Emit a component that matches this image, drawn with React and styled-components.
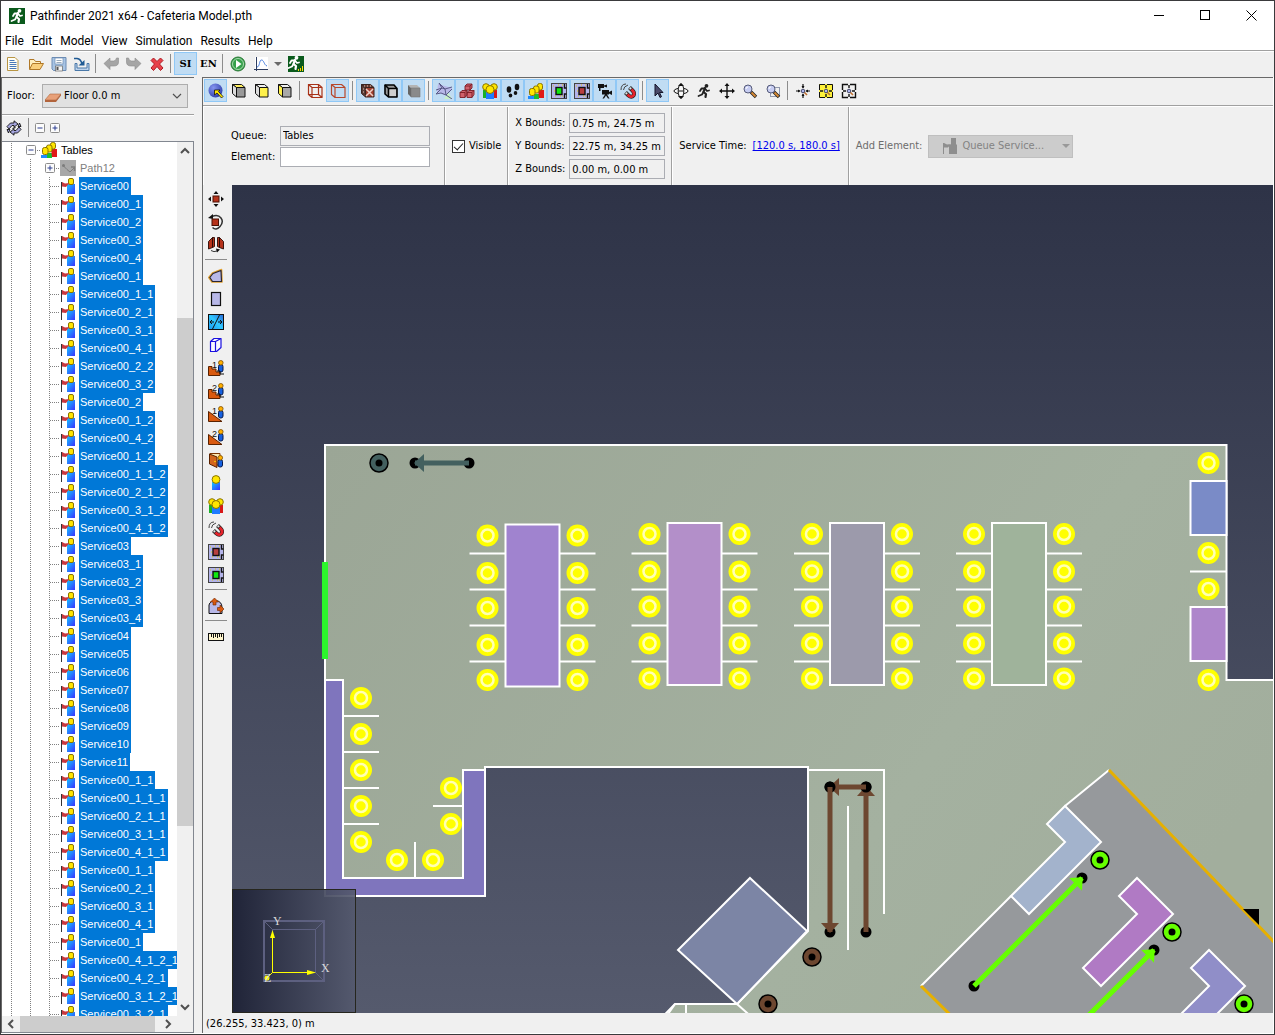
import React from "react";
import styled, { createGlobalStyle, css } from "styled-components";

const Page = createGlobalStyle`
  * {
    box-sizing: border-box;
  }
  body {
    margin: 0;
    background: #f0f0f0;
    overflow: hidden;
  }
  button, input, select {
    font: inherit;
    color: inherit;
    margin: 0;
  }
`;

/* ---------- icons ---------- */

const red = "#b5321a";

const Cube = ({ top = "#ddd", front = "#999", side = "#666", line = "#111" }) => (
  <g stroke={line} strokeLinejoin="round">
    <path d="M1.500 1.500 H10.5 L14 4.5 H5.5 Z" fill={top} />
    <path d="M1.500 1.500 L5.5 4.5 V14 L1.500 10.5 Z" fill={side} />
    <path d="M5.5 4.5 H14 V14 H5.5 Z" fill={front} />
  </g>
);

const Occupant = ({ x = 9.5 }) => (
  <g transform={`translate(${x} 0)`}>
    <rect x="0.5" y="4.500" width="4.500" height="7.500" rx="2" fill="#1560e0" stroke="#05184a" />
    <circle cx="2.800" cy="2.800" r="2.300" fill="#ffb000" stroke="#7a4a00" strokeWidth=".8" />
  </g>
);

const Room = ({ fill }) => (
  <g>
    <rect x=".5" y=".5" width="15" height="15" fill="#b4b4ea" stroke="#444" />
    <path d="M2 3h1M4 13h1M3 8h1M11 2h1M9 13h1M11 13h1M7 2h1" stroke="#e6d200" />
    <rect x="5" y="4.500" width="6" height="7" fill={fill} stroke="#111" strokeWidth="1.400" />
    <path d="M13.500 1v4h2M13.500 15v-4h2" fill="none" stroke="#111" strokeWidth="1.400" />
  </g>
);

const Magnet = () => (
  <g fill="none">
    <path d="M1 7 Q1 1 6 1M3.500 7 Q3.500 3.500 8 2" stroke="#444" />
    <path d="M5.500 9.500 L8.500 12.500 Q11.500 15 13.500 12.500 Q15 10 12.500 7.500 L9.500 4.500" stroke="#222" strokeWidth="4" />
    <path d="M7.500 11.500 L8.500 12.500 Q11.500 15 13.500 12.500 Q15 10 12.500 7.500 L11.500 6.500" stroke="#e5242c" strokeWidth="2.800" />
    <path d="M5.900 9.900 L7 11M9.900 4.900 L11 6" stroke="#e4e4e4" strokeWidth="2.400" />
  </g>
);

const Lens = ({ x = 0, y = 0 }) => (
  <g transform={`translate(${x} ${y})`}>
    <path d="M7.500 7.500 L13 13" stroke="#222" strokeWidth="3.400" />
    <path d="M8.500 8.500 L12.500 12.500" stroke="#d98a35" strokeWidth="1.800" />
    <circle cx="5" cy="5" r="4" fill="#c7cdf2" stroke="#555a78" />
    <path d="M3 5 Q3 3 5 3" fill="none" stroke="#fff" />
  </g>
);

const TinyLens = () => (
  <g>
    <path d="M9 9 L12 12" stroke="#c07030" strokeWidth="1.600" />
    <circle cx="8" cy="8" r="1.800" fill="#aeb6ee" stroke="#44486a" />
  </g>
);

const Group = () => (
  <g>
    <rect x="1" y="7" width="4" height="8" fill="#18b028" />
    <rect x="11" y="7" width="4" height="8" fill="#d81818" />
    <circle cx="4" cy="4" r="3.300" fill="#ffe600" stroke="#8a7400" />
    <circle cx="12" cy="4" r="3.300" fill="#ffe600" stroke="#8a7400" />
    <rect x="4" y="9" width="8" height="7" fill="#1e7bff" />
    <circle cx="8" cy="6.500" r="4" fill="#ffe600" stroke="#8a7400" />
  </g>
);

const Queue = () => (
  <g>
    <path d="M0 13h6v3h-6z" fill="#1e8bff" />
    <path d="M6 11h5v5h-5z" fill="#18c030" />
    <path d="M10 7h6v8h-5z" fill="#e01818" />
    <g fill="#ffe600" stroke="#8a7400">
      <rect x="9.500" y=".5" width="5" height="6.500" rx="2" />
      <rect x="5.500" y="3" width="5.500" height="7" rx="2" />
      <rect x="1.500" y="5.500" width="5.500" height="7" rx="2" />
    </g>
  </g>
);

const Runner = ({ color = "#fff" }) => (
  <g fill="none" stroke={color} strokeWidth="1.800" strokeLinecap="round" strokeLinejoin="round">
    <circle cx="10.500" cy="2.800" r="1" fill={color} />
    <path d="M9 5 L7.500 9 L10 11 L9.500 14" strokeWidth="2.200" />
    <path d="M7.500 9 L6 11.500 L2.500 13" />
    <path d="M9 5.500 L5.500 5.500 L4 8M9 5.500 L11 8 L13 7.500" />
  </g>
);

const Ramp = ({ n, stair }) => (
  <g>
    <path
      d={stair ? "M.5 6.500 H4 V9 H8 V12 H12 V15.500 H.5 Z" : "M.5 5.500 L14 15.500 H.5 Z"}
      fill="#d95a10"
      stroke="#5a2200"
    />
    <Occupant x={10} />
    {stair && <path d="M9 11 H12 V14 H16" fill="none" stroke="#111" />}
    <text x="4" y="8" fontSize="9" fontFamily="Liberation Sans" fill="#111">{n}</text>
  </g>
);

const arrows4 = (
  <g fill="#111">
    <path d="M8 0l2.500 3h-5zM8 16l2.500-3h-5zM0 8l3-2.500v5zM16 8l-3-2.500v5z" />
  </g>
);

const ICONS = {
  app: (
    <g>
      <rect width="16" height="16" fill="#0a5a1c" />
      <Runner />
    </g>
  ),
  results: (
    <g>
      <rect width="16" height="16" fill="#0a5a1c" />
      <g transform="translate(-2 -1)"><Runner /></g>
      <path d="M10.500 15v-2M12.500 15v-3M14.500 15v-5" stroke="#ffd800" />
    </g>
  ),
  new: (
    <g>
      <path d="M2.500 1.500h7.500l3 3v10h-10.500z" fill="#fffef4" stroke="#b89544" />
      <path d="M4.500 4.500h5M4.500 6.500h7M4.500 8.500h7M4.500 10.500h7M4.500 12.500h7" stroke="#4a78b8" />
    </g>
  ),
  open: (
    <g stroke="#b07828" strokeLinejoin="round">
      <path d="M1.500 13V3.500h4.500l1.500 2h5v3" fill="#ffefc0" />
      <path d="M1.500 13.500L4.500 7.500h11l-3.500 6z" fill="#f9cf7c" />
    </g>
  ),
  save: (
    <g>
      <path d="M1 1.500h14v13H2.500L1 13z" fill="#a8c4e4" stroke="#6c8cb4" />
      <rect x="4" y="2" width="8" height="6" fill="#fff" stroke="#6c8cb4" strokeWidth=".7" />
      <path d="M5.500 4.500h5M5.500 6.500h5" stroke="#9ab" />
      <rect x="4.500" y="10" width="7" height="5" fill="#f4f4f4" stroke="#666" strokeWidth=".7" />
      <rect x="5.500" y="11" width="2" height="3" fill="#555" />
    </g>
  ),
  importFile: (
    <g fill="none">
      <path d="M1 7.500v7h14v-7h-2v4.500H3V7.500z" fill="#bcd2ec" stroke="#4a78a8" />
      <path d="M0 2.500h3Q7 3 8 8" stroke="#1f5a94" strokeWidth="1.500" />
      <path d="M4.500 9.500H10.500V4z" fill="#1f5a94" />
    </g>
  ),
  undo: <path d="M1 7.500L7 2v3h3.500Q13 5 13.500 2H15.500V6Q15.500 10 11 10H7v3.500z" fill="#a5a5a5" stroke="#8a8a8a" strokeWidth=".6" />,
  redo: <path d="M15 7.500L9 2v3H5.500Q3 5 2.500 2H.5V6Q.5 10 5 10H9v3.500z" fill="#a5a5a5" stroke="#8a8a8a" strokeWidth=".6" />,
  remove: <path d="M2 4.500L4.500 2 8 5.500 11.500 2 14 4.500 10.500 8 14 12 11.500 14.500 8 10.500 4.500 14.500 2 12 5.500 8z" fill="#e8414a" stroke="#b01c24" />,
  run: (
    <g>
      <circle cx="8" cy="8" r="7" fill="#35a04a" stroke="#2c7838" />
      <circle cx="8" cy="8" r="5.500" fill="none" stroke="#a8d8ae" />
      <path d="M6 4l5.500 4L6 12z" fill="#fff" />
    </g>
  ),
  plot: (
    <g fill="none">
      <rect x="2" y="1" width="13" height="13" fill="#fff" />
      <path d="M3.500 1v14M1 13.500h14" stroke="#2c3c60" />
      <path d="M4 11C7 11 6 4 8.500 4S11 9 14 10" stroke="#4a80e0" />
    </g>
  ),
  floor: (
    <g>
      <path d="M0 12l5-6h11l-5 6z" fill="#e8a078" stroke="#b06a40" strokeWidth=".6" />
      <path d="M0 12h11l5-6v1.500L11 14H0z" fill="#b2643c" />
    </g>
  ),
  sync: (
    <g fill="#a4a4dc" stroke="#111" strokeWidth=".9" strokeLinejoin="round">
      <path d="M1 6.500L4.500 3H8V.800L12 4 8 7.200V5.500H6L3 9z" />
      <path d="M15 9.500L11.500 13H8v2.200L4 12l4-3.200v1.700h2L13 7z" />
      <path d="M1 9.500h3L2.500 13zM15 6.500h-3L13.500 3z" />
      <path d="M6.500 8.500l3-1" stroke="#111" strokeWidth="1.200" />
    </g>
  ),
  minus: (
    <g>
      <rect x="3.500" y="3.500" width="9" height="9" rx="1" fill="#fcfcfc" stroke="#8c8c8c" />
      <path d="M5.500 8h5" stroke="#2a3c90" />
    </g>
  ),
  plus: (
    <g>
      <rect x="3.500" y="3.500" width="9" height="9" rx="1" fill="#fcfcfc" stroke="#8c8c8c" />
      <path d="M5.500 8h5M8 5.500v5" stroke="#2a3c90" />
    </g>
  ),
  path: (
    <g>
      <rect width="16" height="16" fill="#a8a8a8" />
      <path d="M3 5.500l4 4 3 2.500 4-4" fill="none" stroke="#7c7c7c" />
      <circle cx="3.500" cy="5.500" r="1.500" fill="#7c7c7c" />
      <path d="M11 7h3.500v4" fill="none" stroke="#7c7c7c" strokeWidth="1.500" />
    </g>
  ),
  service: (
    <g>
      <defs>
        <linearGradient id="body" x1="0" y1="0" x2="1" y2="1">
          <stop offset="0" stopColor="#12c8ff" />
          <stop offset="1" stopColor="#3a30ff" />
        </linearGradient>
      </defs>
      <rect x="7" y="6" width="8" height="10" fill="url(#body)" />
      <rect x="8.500" y=".5" width="5" height="6" rx="1.500" fill="#ffe600" stroke="#8a7400" />
      <path d="M1.500 4v12" stroke="#333" />
      <path d="M2 4l3 1.500 4.500-.5L6 9 2 8.500z" fill="#c8383e" />
    </g>
  ),
  serviceOff: (
    <g fill="#8e8e8e">
      <path d="M7 6.500h8V16H7zM9 0h5v6.500H9zM1 5h1v11H1zM2 5l3 1.500L9 6 6 9.500H2z" />
    </g>
  ),
  globe: (
    <g>
      <defs>
        <radialGradient id="ball" cx=".35" cy=".3" r=".8">
          <stop offset="0" stopColor="#8494ee" />
          <stop offset="1" stopColor="#2a3aa8" />
        </radialGradient>
      </defs>
      <circle cx="7.500" cy="7.500" r="7" fill="url(#ball)" />
      <path d="M6.500 7h5.500l-1.500 1.500 4.500 5-1.500 1.500-4.500-5L6.500 12z" fill="#ffe600" stroke="#111" strokeWidth=".8" />
    </g>
  ),
  top: <Cube top="#ffee60" front="#999" side="#ddd" />,
  front: <Cube top="#eee" front="#fff14a" side="#ddd" />,
  side: <Cube top="#eee" front="#a8a8a8" side="#fff14a" />,
  wire: (
    <g fill="none" stroke="#a83218" strokeWidth="1.200">
      <path d="M1.500 1.500h10v10h-10zM5 4.500h10v10H5zM1.500 1.500L5 4.500M11.500 1.500l3.500 3M1.500 11.500l3.500 3M11.500 11.500l3.500 3" />
    </g>
  ),
  solid: (
    <g fill="none" stroke="#b8482c" strokeWidth="1.200" strokeLinejoin="round">
      <path d="M1.500 1.500h10l3.500 3v10H5l-3.500-3zM1.500 1.500L5 4.500h10M5 4.500v10" />
    </g>
  ),
  texture: (
    <g>
      <Cube top="#6a3a30" front="#a04030" side="#5a3a34" line="#3a2420" />
      <path d="M6 6l7 7M13 6l-7 7" stroke="#f0d0c8" strokeWidth="1.500" />
      <path d="M4 3h1M7 3h1M10 3h1M3 6h1M3 9h1" stroke="#e0c8c0" />
    </g>
  ),
  outline: (
    <g stroke="#000" strokeWidth="1.600" strokeLinejoin="round">
      <path d="M2 2H11L14 5.500V14H5.500L2 11Z" fill="#999" />
      <path d="M2 2L5.500 5.500H14M5.500 5.500V14" fill="none" />
      <path d="M6.500 6.500h6.500v6.500H6.500z" fill="#cfcfcf" stroke="none" />
    </g>
  ),
  shade: (
    <g>
      <path d="M2 2H11L14 5H5Z" fill="#b4b4b4" />
      <path d="M2 2L5 5V14L2 11Z" fill="#666" />
      <path d="M5 5h9v9H5z" fill="#8a8a8a" stroke="#777" strokeWidth=".6" />
    </g>
  ),
  mesh: (
    <g fill="none" stroke="#5a5a88">
      <path d="M2 1l14 4-5 8-10-4z" fill="#b8b8e8" stroke="none" />
      <path d="M12 9l4 7h-8z" fill="#c8f0c8" stroke="none" />
      <path d="M3 0l3 5-6 2M3 0l6 6 7-2M0 11l6-6 3 1 1 6M0 11l5-1 5 2 6-6M10 12l6 4" />
    </g>
  ),
  blocks: (
    <g fill="#d0606a" stroke="#7a1c24" strokeWidth=".9" strokeLinejoin="round">
      <path d="M6 3l2-2h5v4l-2 2H6zM1 9.500l2-2h5v4l-2 3H1zM8 9.500l2-2h5v4l-2 3H8z" />
      <path d="M6 3h5v4M11 3l2-2M1 9.500h5v5M6 9.500l2-2M8 9.500h5v5M13 9.500l2-2" fill="none" />
    </g>
  ),
  group: <Group />,
  steps: (
    <g fill="#111">
      <ellipse cx="4" cy="6.500" rx="2.300" ry="3.300" />
      <ellipse cx="5.500" cy="12.500" rx="1.800" ry="2" />
      <ellipse cx="12" cy="4" rx="2.300" ry="3.300" />
      <ellipse cx="10.500" cy="10" rx="1.800" ry="2" />
    </g>
  ),
  queue: <Queue />,
  roomGreen: <Room fill="#10e810" />,
  roomRed: <Room fill="#b84040" />,
  camera: (
    <g fill="#111">
      <path d="M1 1h6v4H1zM7 2.500l3-1v3l-3-1zM2 5h1.500v3H2zM5 7h7v4.500H5zM12 9l3-1.500v4.500L12 10.500zM8 11.500h2l2.500 4H11l-2-3-2 3H5.500z" />
    </g>
  ),
  magnet: <Magnet />,
  pointer: <path d="M5 1v12l3-3 2 4.500 1.500-.8L9.500 9.500H13z" fill="#4a4a6a" stroke="#15152a" />,
  orbit: (
    <g fill="#f8f8f8" stroke="#111">
      <ellipse cx="8" cy="8" rx="7" ry="2.800" />
      <ellipse cx="8" cy="8" rx="2.800" ry="7" />
      <path d="M5 3l3-3 3 3zM5 13l3 3 3-3z" fill="#111" stroke="none" />
      <path d="M5.500 8h5" stroke="#111" />
    </g>
  ),
  roam: <Runner color="#222" />,
  pan: (
    <g>
      {arrows4}
      <path d="M8 2v12M2 8h12" stroke="#111" strokeWidth="1.400" />
    </g>
  ),
  zoom: <Lens x={1} y={1} />,
  zoomBox: (
    <g>
      <rect x="5.500" y="4.500" width="9" height="9" fill="none" stroke="#33406a" strokeDasharray="1 1" />
      <Lens x={1} y={1} />
    </g>
  ),
  fit: (
    <g>
      <path d="M8 1v4M8 11v4M1 8h4M11 8h4" stroke="#111" strokeWidth="1.200" />
      <path d="M6.500 3h3L8 5.500zM6.500 13h3L8 10.500zM3 6.500v3L5.500 8zM13 6.500v3L10.500 8z" fill="#111" />
      <TinyLens />
    </g>
  ),
  fitSelection: (
    <g>
      <rect x="1" y="1" width="14" height="14" fill="#fff23a" />
      <path d="M7 1.500H1.500V7M9 1.500h5.500V7M7 14.500H1.500V9M9 14.500h5.500V9" fill="none" stroke="#111" />
      <path d="M8 2v3M8 11v3M2 8h3M11 8h3" stroke="#111" strokeWidth="1.400" />
      <TinyLens />
    </g>
  ),
  fitFloor: (
    <g>
      <path d="M7 1.500H1.500V7M9 1.500h5.500V7M7 14.500H1.500V9M9 14.500h5.500V9" fill="none" stroke="#111" strokeWidth="1.400" />
      <path d="M8 2v3M8 11v3M2 8h3M11 8h3" stroke="#111" strokeWidth="1.400" />
      <TinyLens />
    </g>
  ),
  move: (
    <g>
      {arrows4}
      <rect x="5" y="5" width="6" height="6" fill={red} stroke="#4a1004" />
    </g>
  ),
  rotate: (
    <g>
      <path d="M4 2.500Q10 0 13 4T12 12.500 4.500 13.500" fill="none" stroke="#333" strokeWidth="1.500" />
      <path d="M0 4l5-4v5z" fill="#111" />
      <rect x="4" y="5" width="6.500" height="6.500" fill={red} stroke="#4a1004" />
    </g>
  ),
  mirror: (
    <g fill={red} stroke="#2a0a04" strokeWidth=".9">
      <path d="M.5 4.500L4.500.5v10L.5 12zM4.500.5h2v9l-2 1zM15.500 4.500L11.500.5v10l4 1.500zM11.500.5h-2v9l2 1z" />
      <path d="M3 13.500q3 2 6 .5" fill="none" stroke="#222" />
      <path d="M8 11.500l4 1-3 3z" fill="#111" stroke="none" />
    </g>
  ),
  polygon: (
    <g strokeLinejoin="round">
      <path d="M13.500 1.500L14 14H4L.8 9.500 4.500 5z" fill="none" stroke="#e0a030" strokeWidth="1.600" />
      <path d="M13 2.500L13.500 13.500H4.500L1.800 9.500 5 5.500z" fill="#b8b8e8" stroke="#2a2630" strokeWidth="1.200" />
    </g>
  ),
  rect: <rect x="3.500" y="1.500" width="9" height="13" fill="#b8b8e8" stroke="#111" strokeWidth="1.200" />,
  split: (
    <g>
      <defs>
        <linearGradient id="sky" x1="0" y1="1" x2="1" y2="0">
          <stop offset="0" stopColor="#1898f0" />
          <stop offset=".5" stopColor="#30c8ff" />
          <stop offset="1" stopColor="#2868d8" />
        </linearGradient>
      </defs>
      <rect x=".5" y=".5" width="15" height="15" fill="url(#sky)" stroke="#111" />
      <path d="M11.500 1L4.500 15M2 8h4M4 6L2 8l2 2M10 8h4M12 6l2 2-2 2" fill="none" stroke="#111" />
    </g>
  ),
  box: (
    <g fill="#fafaff" stroke="#1a10e0" strokeWidth="1.200" strokeLinejoin="round">
      <path d="M2.500 4.500L6 1.500h7v9l-4.500 4h-6z" />
      <path d="M2.500 4.500h5v10M7.500 4.500L13 1.500" fill="none" />
    </g>
  ),
  stair1: <Ramp n="1" stair />,
  stair2: <Ramp n="2" stair />,
  ramp1: <Ramp n="1" />,
  ramp2: <Ramp n="2" />,
  door: (
    <g>
      <path d="M2 1.500h10V13H5z" fill="#ffe8b0" stroke="#7a3400" />
      <path d="M1.500 2L9 5v10.500L1.500 12z" fill="#d2641c" stroke="#5a2200" />
      <circle cx="7" cy="9.500" r=".8" fill="#ffd800" />
      <g transform="translate(0 3)"><Occupant x={9.500} /></g>
    </g>
  ),
  person: (
    <g>
      <rect x="4" y="7" width="8" height="8" fill="url(#body)" />
      <circle cx="8" cy="4.500" r="3.900" fill="#ffe600" stroke="#8a7400" />
    </g>
  ),
  attractor: (
    <g>
      <path d="M1 15.500V7Q2 2.500 8 2.500q6 1 6 7v6z" fill="#b8b8e8" stroke="#111" />
      <path d="M6.500 0l4 4H8v3H5V4H2.500zM16 11l-4-4v2.500h-2.500v3H12V15z" fill="#d95a10" stroke="#6a2400" strokeWidth=".6" />
    </g>
  ),
  ruler: (
    <g>
      <rect x=".5" y="4.500" width="15" height="7" fill="#fff6cc" stroke="#111" />
      <path d="M3.500 5v3M5.500 5v4M7.500 5v3M9.500 5v4M11.500 5v3M13.500 5v3" stroke="#111" />
    </g>
  ),
};

const Icon = ({ name }) => (
  <Glyph viewBox="0 0 16 16" aria-hidden="true">
    {ICONS[name]}
  </Glyph>
);

/* ---------- data ---------- */

const menus = ["File", "Edit", "Model", "View", "Simulation", "Results", "Help"];

const viewTools = [
  [["globe", true], ["top"], ["front"], ["side"]],
  [["wire"], ["solid", true]],
  [["texture", true], ["outline", true], ["shade", true]],
  [
    ["mesh", true], ["blocks", true], ["group", true], ["steps", true], ["queue", true],
    ["roomGreen", true], ["roomRed", true], ["camera", true], ["magnet", true],
  ],
  [["pointer", true], ["orbit"], ["roam"], ["pan"], ["zoom"], ["zoomBox"]],
  [["fit"], ["fitSelection"], ["fitFloor"]],
];

const drawTools = [
  ["move", "rotate", "mirror"],
  [
    "polygon", "rect", "split", "box", "stair1", "stair2", "ramp1", "ramp2",
    "door", "person", "group", "magnet", "roomRed", "roomGreen",
  ],
  ["attractor"],
  ["ruler"],
];

const services = [
  "00", "00_1", "00_2", "00_3", "00_4", "00_1", "00_1_1", "00_2_1", "00_3_1", "00_4_1",
  "00_2_2", "00_3_2", "00_2", "00_1_2", "00_4_2", "00_1_2", "00_1_1_2", "00_2_1_2",
  "00_3_1_2", "00_4_1_2", "03", "03_1", "03_2", "03_3", "03_4", "04", "05", "06", "07",
  "08", "09", "10", "11", "00_1_1", "00_1_1_1", "00_2_1_1", "00_3_1_1", "00_4_1_1",
  "00_1_1", "00_2_1", "00_3_1", "00_4_1", "00_1", "00_4_1_2_1", "00_4_2_1",
  "00_3_1_2_1", "00_3_2_1",
];

const bounds = [
  ["X", "0.75 m, 24.75 m"],
  ["Y", "22.75 m, 34.25 m"],
  ["Z", "0.00 m, 0.00 m"],
];

const diningTables = [
  { x: 505.5, y: 524.5, fill: "#a083cf" },
  { x: 667.5, y: 523, fill: "#b38fc9" },
  { x: 830, y: 523, fill: "#9c9aab" },
  { x: 992, y: 523, fill: "#9fb39b" },
];

const seats = [
  [1208.5, 463], [1208.5, 553], [1208.5, 589], [1208.5, 680],
  [361, 698], [361, 734], [361, 770], [361, 806], [361, 842],
  [451, 788], [451, 824], [397, 860], [433, 860],
];

/* ---------- scene ---------- */

const Seat = ({ x, y }) => (
  <g>
    <circle cx={x} cy={y} r="11" fill="#ffff00" />
    <circle cx={x} cy={y} r="6" fill="none" stroke="#ffffb4" strokeWidth="2.500" />
  </g>
);

const Target = ({ x, y, color }) => (
  <g>
    <circle cx={x} cy={y} r="9" fill={color} stroke="#000" strokeWidth="1.500" />
    <circle cx={x} cy={y} r="3.500" fill="#000" />
  </g>
);

const Arrow = ({ from, to, color }) => {
  const dx = to[0] - from[0];
  const dy = to[1] - from[1];
  const len = Math.hypot(dx, dy);
  const angle = (Math.atan2(dy, dx) * 180) / Math.PI;
  return (
    <g>
      <circle cx={from[0]} cy={from[1]} r="5.500" />
      <circle cx={to[0]} cy={to[1]} r="5.500" />
      <g transform={`translate(${from[0]} ${from[1]}) rotate(${angle})`} fill={color}>
        <rect x="0" y="-2.500" width={len} height="5" />
        <path d={`M${len + 1} 0 l-10 -9 v18 z`} />
      </g>
    </g>
  );
};

const DiningTable = ({ x, y, fill }) => (
  <g>
    <path
      d={[30.5, 66.5, 102.5, 138.5].map((d) => `M${x - 36} ${523 + d}h36M${x + 54} ${523 + d}h36`).join("")}
    />
    <rect x={x} y={y} width="54" height="162" fill={fill} />
    <g stroke="none">
      {[11, 48.5, 83.5, 120.5, 155.5].map((d) => (
        <g key={d}>
          <Seat x={x - 18} y={y + d} />
          <Seat x={x + 72} y={y + d} />
        </g>
      ))}
    </g>
  </g>
);

const Counter = ({ x, y, fill }) => (
  <path
    transform={`translate(${x} ${y})`}
    d="M0 0L36 36L-36 108L-54 90L0 36L-18 18Z"
    fill={fill}
  />
);

const Scene = () => (
  <Drawing aria-label="Floor plan">
    <defs>
      <linearGradient id="ground" x1="325" y1="445" x2="1100" y2="1013" gradientUnits="userSpaceOnUse">
        <stop offset="0" stopColor="#9ba696" />
        <stop offset=".7" stopColor="#a4b1a0" />
        <stop offset="1" stopColor="#a2ae9d" />
      </linearGradient>
    </defs>
    <g transform="translate(-232 -185)" fill="none" stroke="#fff" strokeWidth="2">
      <path
        d="M325 445H1226.500V680H3000V1400H400L675 1004H737L808 931V767H485V896H325Z"
        fill="url(#ground)"
      />
      <path d="M325 680H343V878H463V770H485V896H325Z" fill="#7f75bd" />
      <path d="M485 767V896" />
      <path d="M750 878L807 931L737 1004L678 950Z" fill="#7c85a5" />
      <path d="M737 1004L800 1060M686 1004V1400M675 1004L640 1040" />
      <path d="M808 770H884V914M848 806V950" />
      <path d="M343 716h36M343 752h36M343 788h36M343 824h36M433 806h30M415 842v36" />
      <rect x="1190.500" y="481" width="36" height="54" fill="#7a8bc7" />
      <rect x="1190.500" y="607" width="36" height="54" fill="#ae86cb" />
      <path d="M1190 571.500h37" />
      {diningTables.map((t) => (
        <DiningTable key={t.x} {...t} />
      ))}

      <path
        d="M1109 770L1065 806L1047 824L1065 842L1011 896L921 986L1335 1400H1720Z"
        fill="#96999c"
        stroke="none"
      />
      <path d="M1109 770L1065 806M1011 896L921 986" />
      <path d="M1109 770L1720 1407M921 986L1340 1400" stroke="#e6b000" strokeWidth="3" />
      <Counter x={1065} y={806} fill="#a3b3cc" />
      <Counter x={1137} y={878} fill="#b07ac4" />
      <Counter x={1209} y={950} fill="#908ec8" />
      <path d="M1243 909H1259V925Z" fill="#000" stroke="none" />

      <g stroke="none">
        <rect x="322" y="562" width="6" height="97" fill="#2cf52c" />
        {seats.map(([x, y]) => (
          <Seat key={`${x}-${y}`} x={x} y={y} />
        ))}
        <g fill="#000">
          <Target x={379} y={463} color="#43605f" />
          <Arrow from={[469, 463]} to={[415, 463]} color="#43605f" />
          <Arrow from={[866, 932]} to={[866, 787]} color="#6d4730" />
          <Arrow from={[866, 787]} to={[830, 787]} color="#6d4730" />
          <Arrow from={[830, 787]} to={[830, 932]} color="#6d4730" />
          <Target x={812} y={957} color="#6d4730" />
          <Target x={768} y={1004} color="#6d4730" />
          <Arrow from={[974, 986]} to={[1082, 878]} color="#66ff00" />
          <Arrow from={[1046, 1058]} to={[1154, 950]} color="#66ff00" />
          <Target x={1100} y={860} color="#66ff00" />
          <Target x={1172} y={932} color="#66ff00" />
          <Target x={1244} y={1004} color="#66ff00" />
        </g>
      </g>
    </g>
  </Drawing>
);

const Compass = () => (
  <AxisBox>
    <svg width="122" height="122" viewBox="0 0 122 122">
      <g fill="none" stroke="#5d6080">
        <rect x="31" y="31" width="60" height="60" strokeWidth="2" />
        <rect x="39.500" y="39.500" width="43" height="43" />
        <path d="M31 31l9 9M91 31l-9 9M91 91l-9 -9M31 91l9 -9" />
      </g>
      <path d="M39.500 46v36.500H80M39.500 82.500l-6 6" fill="none" stroke="#ffff00" />
      <path d="M39.500 40l2.500 8h-5zM83 82.500l-9 -2.500v5z" fill="#ffff00" />
      <circle cx="34" cy="88" r="2.500" fill="#ffff00" />
      <g fill="#d8d8d8" fontFamily="Liberation Serif" fontSize="12">
        <text x="40" y="35">Y</text>
        <text x="88" y="82">X</text>
        <text x="31" y="92">Z</text>
      </g>
    </svg>
  </AxisBox>
);

/* ---------- app ---------- */

const Chevron = ({ d, thin }) => (
  <svg width="10" height="10" viewBox="0 0 10 10" aria-hidden="true">
    <path d={d} fill="none" stroke="#505050" strokeWidth={thin ? 1.2 : 2} />
  </svg>
);

const App = () => {
  return (
    <Window>
      <Page />
      <TitleBar>
        <Icon name="app" />
        <Title>Pathfinder 2021 x64 - Cafeteria Model.pth</Title>
        <WindowButton aria-label="Minimize">
          <svg width="11" height="11"><path d="M0 5.500h10" stroke="#000" /></svg>
        </WindowButton>
        <WindowButton aria-label="Maximize">
          <svg width="11" height="11"><rect x=".5" y=".5" width="9" height="9" fill="none" stroke="#000" /></svg>
        </WindowButton>
        <WindowButton aria-label="Close">
          <svg width="11" height="11"><path d="M.5.5l10 10M10.500.5l-10 10" stroke="#000" /></svg>
        </WindowButton>
      </TitleBar>
      <MenuBar>
        {menus.map((m) => (
          <MenuItem key={m}>{m}</MenuItem>
        ))}
      </MenuBar>
      <MainTools>
        <Tool aria-label="New"><Icon name="new" /></Tool>
        <Tool aria-label="Open"><Icon name="open" /></Tool>
        <Tool aria-label="Save"><Icon name="save" /></Tool>
        <Tool aria-label="Import"><Icon name="importFile" /></Tool>
        <Divider />
        <Tool aria-label="Undo"><Icon name="undo" /></Tool>
        <Tool aria-label="Redo"><Icon name="redo" /></Tool>
        <Tool aria-label="Delete"><Icon name="remove" /></Tool>
        <Divider />
        <UnitTool $on>SI</UnitTool>
        <UnitTool>EN</UnitTool>
        <Divider />
        <Tool aria-label="Run simulation"><Icon name="run" /></Tool>
        <Tool aria-label="Plot"><Icon name="plot" /></Tool>
        <DropTool aria-label="More plots"><DownMark /></DropTool>
        <Tool aria-label="Results"><Icon name="results" /></Tool>
      </MainTools>

      <Workspace>
        <Sidebar>
          <FloorRow>
            <label htmlFor="floor">Floor:</label>
            <SelectWrap>
              <Icon name="floor" />
              <FloorSelect id="floor">
                <option>Floor 0.0 m</option>
              </FloorSelect>
              <Chevron thin d="M1 3l4 4 4-4" />
            </SelectWrap>
          </FloorRow>
          <TreeTools>
            <Tool aria-label="Sync selection"><Icon name="sync" /></Tool>
            <Divider />
            <MiniTool aria-label="Collapse all"><Icon name="minus" /></MiniTool>
            <MiniTool aria-label="Expand all"><Icon name="plus" /></MiniTool>
          </TreeTools>
          <TreeBox>
            <Tree>
              <Row>
                <Guide />
                <Expander aria-label="Collapse Tables"><Icon name="minus" /></Expander>
                <Branch $short />
                <Icon name="queue" />
                <NodeName>Tables</NodeName>
              </Row>
              <Row>
                <Guide />
                <Guide />
                <Expander aria-label="Expand Path12"><Icon name="plus" /></Expander>
                <Branch $short />
                <Icon name="path" />
                <NodeName $dim>Path12</NodeName>
              </Row>
              {services.map((s, i) => (
                <Row key={i}>
                  <Guide />
                  <Guide />
                  <Guide $last />
                  <Branch />
                  <Icon name="service" />
                  <NodeName $selected>Service{s}</NodeName>
                </Row>
              ))}
            </Tree>
            <ScrollV>
              <ScrollButton aria-label="Scroll up"><Chevron d="M1 7l4-4 4 4" /></ScrollButton>
              <ThumbV />
              <ScrollButton aria-label="Scroll down"><Chevron d="M1 3l4 4 4-4" /></ScrollButton>
            </ScrollV>
            <ScrollH>
              <ScrollButton aria-label="Scroll left"><Chevron d="M7 1L3 5l4 4" /></ScrollButton>
              <ThumbH />
              <ScrollButton aria-label="Scroll right"><Chevron d="M3 1l4 4-4 4" /></ScrollButton>
            </ScrollH>
          </TreeBox>
        </Sidebar>

        <Viewer>
          <ViewTools>
            {viewTools.map((set, i) => (
              <React.Fragment key={i}>
                {i > 0 && <Divider />}
                {set.map(([name, on]) => (
                  <Tool key={name} $on={on} aria-label={name}>
                    <Icon name={name} />
                  </Tool>
                ))}
              </React.Fragment>
            ))}
          </ViewTools>
          <Properties>
            <NameGroup>
              <label htmlFor="queue">Queue:</label>
              <TextBox id="queue" defaultValue="Tables" readOnly />
              <label htmlFor="element">Element:</label>
              <TextBox id="element" $editable />
            </NameGroup>
            <PropGroup>
              <CheckLabel>
                <CheckBox type="checkbox" defaultChecked />
                Visible
              </CheckLabel>
            </PropGroup>
            <BoundsGroup>
              {bounds.map(([axis, value]) => (
                <React.Fragment key={axis}>
                  <label htmlFor={`bounds${axis}`}>{axis} Bounds:</label>
                  <TextBox id={`bounds${axis}`} defaultValue={value} readOnly />
                </React.Fragment>
              ))}
            </BoundsGroup>
            <TimeGroup>
              Service Time:
              <TimeLink href="#time">[120.0 s, 180.0 s]</TimeLink>
            </TimeGroup>
            <AddGroup>
              Add Element:
              <AddButton disabled>
                <Icon name="serviceOff" />
                Queue Service...
                <DownMark />
              </AddButton>
            </AddGroup>
          </Properties>
          <Stage>
            <DrawTools>
              {drawTools.map((set, i) => (
                <React.Fragment key={i}>
                  {i > 0 && <Rule />}
                  {set.map((name) => (
                    <Tool key={name} aria-label={name}>
                      <Icon name={name} />
                    </Tool>
                  ))}
                </React.Fragment>
              ))}
            </DrawTools>
            <Canvas>
              <Scene />
              <Compass />
            </Canvas>
          </Stage>
          <Status>(26.255, 33.423, 0) m</Status>
        </Viewer>
      </Workspace>
    </Window>
  );
};

export default App;

const Window = styled.div`
  display: flex;
  flex-direction: column;
  height: 100vh;
  border: 1px solid #3a3a3c;
  background: #f0f0f0;
  color: #000;
  font-family: "DejaVu Sans Condensed", "DejaVu Sans", sans-serif;
  font-size: 11px;
  line-height: 14px;
`;

const Glyph = styled.svg`
  flex: none;
  width: 16px;
  height: 16px;
`;

const TitleBar = styled.header`
  display: flex;
  align-items: center;
  flex: none;
  height: 30px;
  padding-left: 8px;
  background: #fff;
  font-family: Roboto, sans-serif;
  font-size: 12px;
`;

const Title = styled.div`
  flex: 1;
  padding-left: 5px;
`;

const WindowButton = styled.button`
  display: flex;
  align-items: center;
  justify-content: center;
  width: 46px;
  height: 30px;
  padding: 0 0 2px;
  border: none;
  background: none;
`;

const MenuBar = styled.nav`
  display: flex;
  flex: none;
  height: 20px;
  background: #fff;
  border-bottom: 1px solid #a0a0a0;
  font-family: Roboto, sans-serif;
  font-size: 12px;
`;

const MenuItem = styled.button`
  padding: 0 4px;
  border: none;
  background: none;
`;

const Divider = styled.span`
  flex: none;
  width: 1px;
  height: 19px;
  margin: 0 3px;
  background: #8c8c8c;
`;

const MainTools = styled.div`
  display: flex;
  align-items: center;
  flex: none;
  height: 26px;
  padding-bottom: 2px;
  border-top: 1px solid #fff;
  ${Divider} {
    margin-left: 2px;
  }
`;

const Tool = styled.button`
  display: flex;
  align-items: center;
  justify-content: center;
  flex: none;
  width: 23px;
  height: 23px;
  padding: 0;
  border: 1px solid transparent;
  background: none;
  ${(p) =>
    p.$on &&
    css`
      border-color: #90c8f6;
      background: #c0dcf3;
    `}
`;

const UnitTool = styled(Tool)`
  font-family: "DejaVu Serif", serif;
  font-size: 10px;
  font-weight: bold;
`;

const MiniTool = styled(Tool)`
  width: 15px;
`;

const DropTool = styled(Tool)`
  width: 12px;
`;

const DownMark = styled.span`
  border: 4px solid transparent;
  border-top-color: #6a6a6a;
  border-bottom: none;
`;

const Workspace = styled.main`
  display: flex;
  flex: 1;
  min-height: 0;
  gap: 8px;
  border-right: 1px solid #fff;
  border-bottom: 1px solid #fff;
`;

const Sidebar = styled.aside`
  display: flex;
  flex-direction: column;
  flex: none;
  width: 193px;
  border-top: 1px solid #696969;
  border-left: 1px solid #696969;
`;

const FloorRow = styled.div`
  display: flex;
  align-items: center;
  justify-content: space-between;
  flex: none;
  height: 37px;
  padding: 0 6px 0 5px;
  border-bottom: 1px solid #a0a0a0;
`;

const SelectWrap = styled.div`
  display: grid;
  grid-template-columns: 19px 1fr 15px;
  align-items: center;
  width: 146px;
  height: 24px;
  padding-left: 2px;
  border: 1px solid #adadad;
  background: #e1e1e1;
`;

const FloorSelect = styled.select`
  appearance: none;
  min-width: 0;
  padding: 0;
  border: none;
  outline: none;
  background: none;
`;

const TreeTools = styled.div`
  display: flex;
  align-items: center;
  flex: none;
  height: 26px;
  padding-bottom: 2px;
  border-top: 1px solid #fff;
`;

const TreeBox = styled.div`
  display: grid;
  grid-template-columns: minmax(0, 1fr) 16px;
  grid-template-rows: minmax(0, 1fr) 16px;
  flex: 1;
  min-height: 0;
  border: 1px solid #828790;
  border-left: none;
  background: #fff;
`;

const Tree = styled.ul`
  margin: -1px 0 0;
  padding: 0;
  overflow: hidden;
  list-style: none;
  font-family: "Liberation Sans", Arial, sans-serif;
`;

const Row = styled.li`
  display: flex;
  align-items: center;
  height: 18px;
  padding-left: 9px;
  white-space: nowrap;
`;

const Guide = styled.span`
  flex: none;
  width: ${(p) => (p.$last ? "1px" : "19px")};
  height: 18px;
  background: repeating-linear-gradient(#808080 0 1px, transparent 1px 2px) left / 1px 100% no-repeat;
`;

const Branch = styled.span`
  flex: none;
  width: ${(p) => (p.$short ? "6px" : "10px")};
  height: 1px;
  background: repeating-linear-gradient(90deg, #808080 0 1px, transparent 1px 2px);
`;

const Expander = styled.button`
  display: flex;
  justify-content: center;
  flex: none;
  width: 9px;
  height: 16px;
  margin-left: -4px;
  padding: 0;
  border: none;
  background: none;
`;

const NodeName = styled.span`
  flex: none;
  height: 18px;
  margin-left: 3px;
  padding: 0 2px 0 1px;
  line-height: 18px;
  color: ${(p) => (p.$selected ? "#fff" : p.$dim ? "#808080" : "#000")};
  background: ${(p) => (p.$selected ? "#0078d7" : "none")};
`;

const ScrollV = styled.div`
  display: grid;
  grid-template-rows: 18px 158fr 508fr 172fr 18px;
  background: #f0f0f0;
`;

const ScrollH = styled.div`
  display: grid;
  grid-column: 1 / -1;
  grid-template-columns: 18px 135px 25px;
  background: #f0f0f0;
`;

const ScrollButton = styled.button`
  display: flex;
  align-items: center;
  justify-content: center;
  padding: 0;
  border: none;
  background: none;
  ${ScrollV} &:last-child {
    grid-row: 5;
  }
`;

const ThumbV = styled.div`
  grid-row: 3;
  background: #cdcdcd;
`;

const ThumbH = styled.div`
  background: #cdcdcd;
`;

const Viewer = styled.section`
  display: flex;
  flex-direction: column;
  flex: 1;
  min-width: 0;
  border-top: 1px solid #696969;
  border-left: 1px solid #696969;
`;

const ViewTools = styled.div`
  display: flex;
  align-items: center;
  flex: none;
  height: 28px;
  padding: 0 0 2px 1px;
  border-bottom: 1px solid #a0a0a0;
`;

const Properties = styled.form`
  display: flex;
  flex: none;
  height: 79px;
  border-top: 1px solid #fff;
`;

const PropGroup = styled.div`
  display: flex;
  align-items: center;
  gap: 6px;
  padding: 0 6px 0 7px;
  border-right: 1px solid #a0a0a0;
  box-shadow: inset 1px 0 #fff;
  white-space: nowrap;
`;

const NameGroup = styled(PropGroup)`
  display: grid;
  grid-template-columns: 49px 150px;
  align-content: center;
  gap: 1px 0;
  padding: 0 14px 0 28px;
`;

const BoundsGroup = styled(PropGroup)`
  display: grid;
  grid-template-columns: 54px 96px;
  align-content: center;
  gap: 3px 0;
`;

const TimeGroup = styled(PropGroup)`
  padding-right: 8px;
`;

const AddGroup = styled(PropGroup)`
  border-right: none;
  color: #6d6d6d;
`;

const TextBox = styled.input`
  width: 100%;
  height: 20px;
  padding: 0 2px;
  border: 1px solid #abadb3;
  outline: none;
  background: ${(p) => (p.$editable ? "#fff" : "#f0f0f0")};
`;

const CheckLabel = styled.label`
  display: flex;
  align-items: center;
  gap: 4px;
`;

const CheckBox = styled.input`
  appearance: none;
  display: grid;
  place-content: center;
  width: 13px;
  height: 13px;
  border: 1px solid #333;
  background: #fff;
  &:checked::after {
    content: "";
    width: 4px;
    height: 8px;
    margin-bottom: 2px;
    border: solid #222;
    border-width: 0 1px 1px 0;
    transform: rotate(42deg);
  }
`;

const TimeLink = styled.a`
  color: #0000ee;
`;

const AddButton = styled.button`
  display: flex;
  align-items: center;
  gap: 4px;
  width: 145px;
  height: 23px;
  padding: 0 2px 0 13px;
  border: 1px solid #bfbfbf;
  background: #cccccc;
  color: #838383;
  ${DownMark} {
    margin-left: auto;
    border-top-color: #999;
  }
`;

const Stage = styled.div`
  display: flex;
  flex: 1;
  min-height: 0;
`;

const DrawTools = styled.div`
  display: flex;
  flex-direction: column;
  align-items: center;
  flex: none;
  width: 29px;
  padding: 2px 3px 0 0;
`;

const Rule = styled.span`
  width: 22px;
  height: 1px;
  margin: 3px 0 4px;
  background: #8c8c8c;
`;

const Canvas = styled.div`
  position: relative;
  flex: 1;
  min-width: 0;
  overflow: hidden;
  background: linear-gradient(#2e3347, #555a6d);
`;

const Drawing = styled.svg`
  display: block;
  width: 100%;
  height: 100%;
`;

const AxisBox = styled.div`
  position: absolute;
  left: 0;
  bottom: 0;
  width: 124px;
  height: 124px;
  border: 1px solid #26261e;
  background: linear-gradient(90deg, #202438, rgba(84, 89, 110, 0.9));
`;

const Status = styled.footer`
  flex: none;
  height: 20px;
  padding: 4px 3px 2px;
`;
